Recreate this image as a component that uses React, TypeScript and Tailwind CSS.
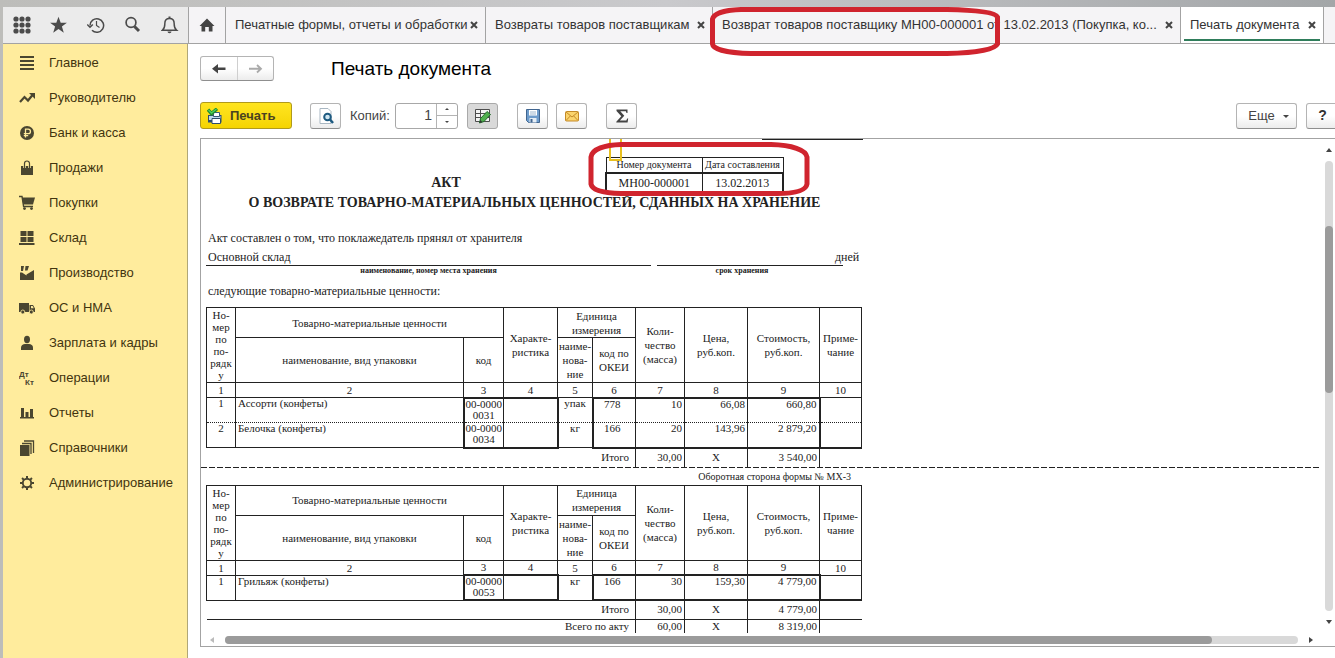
import { useState, type ReactNode } from 'react';

function Icon({ size = 16, box = 16, children }: { size?: number; box?: number; children: ReactNode }) {
  return (
    <svg width={size} height={size} viewBox={`0 0 ${box} ${box}`} aria-hidden="true" className="shrink-0">
      {children}
    </svg>
  );
}

const ink = '#4a4630';

const sections: { label: string; icon: ReactNode }[] = [
  {
    label: 'Главное',
    icon: <path d="M1 1h14v2H1zM1 5h14v2H1zM1 9h14v2H1zM1 13h14v2H1z" fill={ink} />,
  },
  {
    label: 'Руководителю',
    icon: (
      <>
        <path d="M1 12l4.5-5 3.5 3.5L13.5 5" fill="none" stroke={ink} strokeWidth="2.2" />
        <path d="M10 3h6v6z" fill={ink} />
      </>
    ),
  },
  {
    label: 'Банк и касса',
    icon: (
      <>
        <circle cx="8" cy="8" r="7" fill={ink} />
        <path d="M6.5 12.5V4.2h2.7a2.2 2.2 0 0 1 0 4.5H4.8M4.8 10.6h4.4" fill="none" stroke="#ffeb9c" strokeWidth="1.3" />
      </>
    ),
  },
  {
    label: 'Продажи',
    icon: (
      <>
        <path d="M2 6h12v9H2z" fill={ink} />
        <path d="M5.5 8V3.5a2.5 2.5 0 0 1 5 0V8" fill="none" stroke="#ffeb9c" strokeWidth="2.6" />
        <path d="M5.5 8V3.5a2.5 2.5 0 0 1 5 0V8" fill="none" stroke={ink} strokeWidth="1.2" />
      </>
    ),
  },
  {
    label: 'Покупки',
    icon: (
      <>
        <path d="M0 1.5h3l1.6 10H14" fill="none" stroke={ink} strokeWidth="1.4" />
        <path d="M3 2.5h13l-2 7H4.3z" fill={ink} />
        <circle cx="5.5" cy="13.6" r="1.4" fill={ink} />
        <circle cx="12.5" cy="13.6" r="1.4" fill={ink} />
      </>
    ),
  },
  {
    label: 'Склад',
    icon: <path d="M1.500 1h6v5h-6zM8.500 1h6v5h-6zM1.500 7h6v5h-6zM8.500 7h6v5h-6zM0 13h15.500v2H0z" fill={ink} />,
  },
  {
    label: 'Производство',
    icon: (
      <>
        <path d="M1 15V7.500h2L7.500 10.500v-1L15 5v10z" fill={ink} />
        <path d="M2 1h3L4 6H2zM6.500 1h3.500L8.500 5.500H6z" fill={ink} />
      </>
    ),
  },
  {
    label: 'ОС и НМА',
    icon: (
      <>
        <path d="M0 3h10v9H0zM10.500 5H14l2 3.500V12h-5.500z" fill={ink} />
        <path d="M12 6h1.600l1.200 2.300H12z" fill="#ffeb9c" />
        <circle cx="3.800" cy="12" r="2" fill={ink} stroke="#ffeb9c" strokeWidth=".8" />
        <circle cx="12.300" cy="12" r="2" fill={ink} stroke="#ffeb9c" strokeWidth=".8" />
      </>
    ),
  },
  {
    label: 'Зарплата и кадры',
    icon: (
      <>
        <ellipse cx="8" cy="4.500" rx="3" ry="3.700" fill={ink} />
        <path d="M2 15v-2.500C2 10.300 4 9.300 6 9h4c2 .3 4 1.300 4 3.500V15z" fill={ink} />
      </>
    ),
  },
  {
    label: 'Операции',
    icon: (
      <>
        <text x="0" y="7" fontSize="8" fontWeight="bold" fontFamily="Liberation Sans, sans-serif" fill={ink}>Дт</text>
        <text x="6" y="15" fontSize="8" fontWeight="bold" fontFamily="Liberation Sans, sans-serif" fill={ink}>Кт</text>
      </>
    ),
  },
  {
    label: 'Отчеты',
    icon: <path d="M2 3h3v9H2zM6.500 7h3v5h-3zM11 4h3v8h-3zM1 12h14v1.500H1z" fill={ink} />,
  },
  {
    label: 'Справочники',
    icon: (
      <>
        <path d="M1 5h9.500v11H1z" fill={ink} />
        <path d="M3 3.500h9V14M5 1h9.500v12" fill="none" stroke={ink} strokeWidth="1.300" />
      </>
    ),
  },
  {
    label: 'Администрирование',
    icon: (
      <>
        <circle cx="8" cy="8" r="4.200" fill="none" stroke={ink} strokeWidth="1.900" />
        <path
          d="M8 1v2.500M8 12.500V15M1 8h2.500M12.500 8H15M3.050 3.050l1.800 1.800M11.150 11.150l1.800 1.800M3.050 12.950l1.800-1.800M11.150 4.850l1.800-1.800"
          stroke={ink}
          strokeWidth="2"
        />
      </>
    ),
  },
];

const gray = '#4b4b4b';

const quickTools: { label: string; icon: ReactNode }[] = [
  {
    label: 'Меню функций',
    icon: (
      <g fill={gray}>
        {[3, 9, 15].map((y) => [3, 9, 15].map((x) => <circle key={`${x}-${y}`} cx={x} cy={y} r="2.600" />))}
      </g>
    ),
  },
  {
    label: 'Избранное',
    icon: <path d="M8.500 .8l2.200 6h6.200l-5 3.800 1.900 6.200-5.300-3.700-5.300 3.700 1.900-6.200-5-3.800h6.200z" fill={gray} />,
  },
  {
    label: 'История',
    icon: (
      <g fill="none" stroke={gray} strokeWidth="1.500">
        <path d="M3 9.500a6.800 6.800 0 1 1 2 4.800" />
        <path d="M9.500 5v4.500l3 2" strokeWidth="1.200" />
        <path d="M.2 8.500L3 11.300l2.800-2.800" />
      </g>
    ),
  },
  {
    label: 'Поиск',
    icon: (
      <g fill="none" stroke={gray}>
        <circle cx="7" cy="6.500" r="4.900" strokeWidth="1.700" />
        <path d="M10.500 10.500l4.500 4.500" strokeWidth="3" />
      </g>
    ),
  },
  {
    label: 'Оповещения',
    icon: (
      <>
        <path d="M1.500 14.200c2.500-2 2.300-4 2.300-6.500C3.800 4.500 5.800 2.500 8.500 2.500s4.700 2 4.700 5.200c0 2.500-.2 4.500 2.300 6.500z" fill="none" stroke={gray} strokeWidth="1.500" />
        <path d="M6.500 15.500h4a2 1.700 0 0 1-4 0zM7.500 .5h2v2h-2z" fill={gray} />
      </>
    ),
  },
];

const tabs = [
  { label: 'Печатные формы, отчеты и обработки', width: 'w-[260px]' },
  { label: 'Возвраты товаров поставщикам', width: 'w-[227px]' },
  { label: 'Возврат товаров поставщику МН00-000001 от 13.02.2013 (Покупка, ко...', width: 'w-[468px]', marked: true },
  { label: 'Печать документа', width: 'w-[143px]', active: true },
];

function TopBar() {
  return (
    <header className="flex h-[37px] shrink-0 border-b border-[#a3a3a3] bg-[#f5f4f6]">
      <div className="flex w-[185px] shrink-0 items-center gap-[19px] bg-[#ebebeb] pl-[10px]">
        {quickTools.map((t) => (
          <button key={t.label} type="button" aria-label={t.label} className="shrink-0">
            <Icon size={18} box={18}>{t.icon}</Icon>
          </button>
        ))}
      </div>
      <button type="button" aria-label="Начальная страница" className="flex w-[38px] shrink-0 items-center justify-center border-x border-[#a3a3a3]">
        <Icon size={16}>
          <path d="M8 1.500L15.500 9H13.500v5.500H9.800V10H6.200v4.500H2.500V9H.5z" fill="#444" />
        </Icon>
      </button>
      <nav aria-label="Открытые окна" className="flex min-w-0">
        {tabs.map((t) => (
          <div
            key={t.label}
            className={`relative flex shrink-0 items-center border-r border-[#a3a3a3] pr-[7px] pl-[9px] ${t.width} ${t.active ? 'bg-white' : ''}`}
          >
            <a href="#" className="min-w-0 flex-1 text-[13px] whitespace-nowrap text-[#333]">{t.label}</a>
            <button type="button" aria-label={`Закрыть: ${t.label}`} className="shrink-0">
              <Icon size={8} box={8}>
                <path d="M1 1l6 6M7 1L1 7" stroke="#444" strokeWidth="2" />
              </Icon>
            </button>
            {t.active && <span className="absolute inset-x-[3px] bottom-[2px] h-[2px] bg-[#2f7d5b]" />}
            {t.marked && (
              <svg width="292" height="50" viewBox="0 0 292 50" aria-hidden="true" className="pointer-events-none absolute -top-px -left-1 z-10">
                <path
                  d="M32 3.500H238C266 4 286 6 288.500 11V38C286 43 268 47 238 47.500H42C18 47 4 43 3.500 38V13C5 7 18 4 32 3.500Z"
                  fill="none"
                  stroke="#d0242e"
                  strokeWidth="5"
                />
              </svg>
            )}
          </div>
        ))}
      </nav>
    </header>
  );
}

function Sidebar() {
  return (
    <nav aria-label="Разделы" className="w-[185px] shrink-0 border-r border-[#b0a778] bg-[#ffec9d] pt-[1px]">
      <ul>
        {sections.map((s) => (
          <li key={s.label}>
            <a href="#" className="flex h-[35px] items-center gap-[14px] pl-4 text-[13px] text-[#42340f]">
              <Icon>{s.icon}</Icon>
              {s.label}
            </a>
          </li>
        ))}
      </ul>
    </nav>
  );
}

const button =
  'flex h-[26px] shrink-0 items-center justify-center rounded-[3px] border border-[#b4b4b4] border-b-[#8f8f8f] bg-linear-to-b from-white from-50% to-[#ececec]';

function Toolbar() {
  const [copies, setCopies] = useState(1);
  return (
    <div className="flex items-center pt-[21px] pb-[9px] text-[13px] text-[#444]">
      <button
        type="button"
        className="flex h-[27px] w-[92px] shrink-0 items-center gap-[7px] rounded-[3px] border border-[#b09a1c] bg-linear-to-b from-[#ffe51f] to-[#f5d400] pl-[6px] font-bold text-[#4a4320]"
      >
        <Icon>
          <path d="M1 7h13.500v7.500H1z" fill="#2f4d6c" />
          <path d="M2 8h11.500v4H2z" fill="#bcd9ee" />
          <path d="M6.500 4.500h6v4h-6z" fill="#fff" stroke="#375a78" />
          <path d="M5 10.500h8.500v5H5z" fill="#fff" stroke="#2f4d6c" />
          <path d="M1 1.500l3.500 4L10 .8" fill="none" stroke="#1c8a2f" strokeWidth="3.400" />
          <path d="M1.500 2l3 3L9.500 1" fill="none" stroke="#4fd05a" strokeWidth="1.400" />
        </Icon>
        Печать
      </button>
      <button type="button" aria-label="Предварительный просмотр" className={`${button} ml-[18px] w-[31px]`}>
        <Icon>
          <path d="M2 .5h8l3 3v12H2z" fill="#fff" stroke="#a9b7c2" />
          <circle cx="9.500" cy="9" r="3.300" fill="#cfe6f2" stroke="#1d5a80" strokeWidth="2" />
          <path d="M12 11.500l3 3.500" stroke="#1d5a80" strokeWidth="2.500" />
        </Icon>
      </button>
      <label htmlFor="copies" className="ml-[9px] w-[45px] shrink-0">Копий:</label>
      <div className="flex h-[26px] w-[63px] shrink-0 rounded-[3px] border border-[#a8a8a8] bg-white">
        <input
          id="copies"
          type="text"
          inputMode="numeric"
          value={copies}
          onChange={(e) => setCopies(Number(e.target.value) || 0)}
          className="w-0 min-w-0 flex-1 pr-1 text-right text-[14px] outline-none"
        />
        <div className="flex w-[21px] flex-col border-l border-[#b4b4b4]">
          <button type="button" aria-label="Больше" onClick={() => setCopies(copies + 1)} className="flex flex-1 items-center justify-center border-b border-[#b4b4b4]">
            <Icon size={6} box={6}><path d="M1 4l2-2 2 2z" fill="#444" /></Icon>
          </button>
          <button type="button" aria-label="Меньше" onClick={() => setCopies(Math.max(1, copies - 1))} className="flex flex-1 items-center justify-center">
            <Icon size={6} box={6}><path d="M1 2l2 2 2-2z" fill="#444" /></Icon>
          </button>
        </div>
      </div>
      <button
        type="button"
        aria-label="Редактирование"
        aria-pressed="true"
        className="ml-[9px] flex h-[26px] w-[31px] shrink-0 items-center justify-center rounded-[3px] border border-[#a9a9a9] bg-[#d9d9d9]"
      >
        <Icon size={18} box={18}>
          <path d="M1.500 2.500h14v12h-14zM1.500 6.500h14M1.500 10.500h14M6.500 2.500v12" fill="#f4f4f4" stroke="#4c4c4c" />
          <path d="M5.500 16l1-4.500L13 4.500l3.500 3L10 14.500z" fill="#4fae4d" stroke="#23692c" />
          <path d="M5.500 16l.8-3 2 2z" fill="#333" />
        </Icon>
      </button>
      <button type="button" aria-label="Сохранить" className={`${button} ml-[19px] w-[31px]`}>
        <Icon>
          <path d="M1.500 1.500h13v13h-11l-2-2z" fill="#6e9ccb" stroke="#40658f" />
          <path d="M4 2h8v5.500H4z" fill="#fff" />
          <path d="M5 4h6M5 6h6" stroke="#9db6cd" />
          <path d="M4.500 10h7v4.500h-7z" fill="#e6eef5" />
          <path d="M5.500 11h2v3.500h-2z" fill="#40658f" />
        </Icon>
      </button>
      <button type="button" aria-label="Отправить по почте" className={`${button} ml-2 w-[31px]`}>
        <Icon>
          <rect x="1.500" y="3.500" width="13" height="9.500" rx="1" fill="#fbd46c" stroke="#c48a28" />
          <path d="M2 4l6 5 6-5M2 12.500L6.300 8M14 12.500L9.700 8" fill="none" stroke="#c48a28" />
        </Icon>
      </button>
      <button type="button" aria-label="Сумма" className={`${button} ml-[19px] w-[31px]`}>
        <Icon>
          <path d="M2.500 1.500h11v3.500h-1l-.6-1.700H6.300l4 4.400-4.400 4.800h6.400l.9-2h1l-.6 4H2.300v-.8l5-5.500-4.800-5.300z" fill="#444" />
        </Icon>
      </button>
      <div className="flex-1" />
      <button type="button" className={`${button} w-[61px] gap-2 pl-1 text-[#444]`}>
        Еще
        <Icon size={6} box={6}><path d="M0 2h6L3 5z" fill="#444" /></Icon>
      </button>
      <button type="button" aria-label="Справка" className={`${button} -mr-1 ml-[9px] w-[33px] text-[14px] font-bold text-[#333]`}>?</button>
    </div>
  );
}

const L = 'border-[#222]';
const hd = `border ${L} p-0 font-normal align-middle`;

type Row = { n: string; name: string; code: [string, string]; unit: string; okei: string; qty: string; price: string; sum: string };
type Total = { label: string; qty: string; sum: string };

function GoodsTable({ rows, totals }: { rows: Row[]; totals: Total[] }) {
  return (
    <table className="w-[656px] table-fixed border-collapse text-center text-[11px] leading-[14px]">
      <colgroup>
        <col className="w-[29px]" />
        <col className="w-[228px]" />
        <col className="w-[40px]" />
        <col className="w-[54px]" />
        <col className="w-[35px]" />
        <col className="w-[43px]" />
        <col className="w-[49px]" />
        <col className="w-[63px]" />
        <col className="w-[72px]" />
        <col className="w-[42px]" />
      </colgroup>
      <thead>
        <tr className="h-[30px]">
          <th rowSpan={2} className={`${hd} leading-[12px]`}>Но-<br />мер<br />по<br />по-<br />рядк<br />у</th>
          <th colSpan={2} className={hd}>Товарно-материальные ценности</th>
          <th rowSpan={2} className={hd}>Характе-<br />ристика</th>
          <th colSpan={2} className={hd}>Единица<br />измерения</th>
          <th rowSpan={2} className={hd}>Коли-<br />чество<br />(масса)</th>
          <th rowSpan={2} className={hd}>Цена,<br />руб.коп.</th>
          <th rowSpan={2} className={hd}>Стоимость,<br />руб.коп.</th>
          <th rowSpan={2} className={hd}>Приме-<br />чание</th>
        </tr>
        <tr className="h-[45px]">
          <th className={hd}>наименование, вид упаковки</th>
          <th className={hd}>код</th>
          <th className={hd}>наиме-<br />нова-<br />ние</th>
          <th className={hd}>код по<br />ОКЕИ</th>
        </tr>
        <tr className="h-[15px] leading-[12px]">
          {['1', '2', '3', '4', '5', '6', '7', '8', '9', '10'].map((n) => (
            <th key={n} className={hd}>{n}</th>
          ))}
        </tr>
      </thead>
      <tbody>
        {rows.map((r, i) => {
          const last = i === rows.length - 1;
          const thin = last ? 'border-b' : 'border-b [border-bottom-style:dotted]!';
          const thick = last ? 'border-b-2' : 'border-b [border-bottom-style:dotted]!';
          const top = i === 0 ? 'border-t-2' : '';
          const cell = `${L} py-0 align-top leading-[11px]`;
          return (
            <tr key={r.n} className="h-[25px]">
              <td className={`${cell} border-x px-0 ${thin}`}>{r.n}</td>
              <td className={`${cell} border-x px-[2px] text-left ${thin}`}>{r.name}</td>
              <td className={`${cell} border-r border-l-2 px-0 ${top} ${thick}`}>{r.code[0]}<br />{r.code[1]}</td>
              <td className={`${cell} border-r-2 border-l px-0 ${top} ${thick}`} />
              <td className={`${cell} px-0 ${thin}`}>{r.unit}</td>
              <td className={`${cell} border-r border-l-2 pr-1 pl-0 ${top} ${thick}`}>{r.okei}</td>
              <td className={`${cell} border-x pr-[2px] pl-0 text-right ${top} ${thick}`}>{r.qty}</td>
              <td className={`${cell} border-x pr-[2px] pl-0 text-right ${top} ${thick}`}>{r.price}</td>
              <td className={`${cell} border-r-2 border-l pr-[2px] pl-0 text-right ${top} ${thick}`}>{r.sum}</td>
              <td className={`${cell} border-r px-0 ${thick}`} />
            </tr>
          );
        })}
      </tbody>
      <tfoot>
        {totals.map((t, i) => {
          const line = i < totals.length - 1 ? 'border-b' : '';
          const align = i > 0 ? 'align-top' : 'align-middle';
          const cell = `${L} ${line} ${align} py-0`;
          return (
            <tr key={t.label} className="h-[19px] leading-[13px]">
              <td colSpan={6} className={`${cell} pr-[6px] pl-0 text-right`}>{t.label}</td>
              <td className={`${cell} border-x pr-[2px] pl-0 text-right`}>{t.qty}</td>
              <td className={`${cell} border-x px-0`}>X</td>
              <td className={`${cell} border-x pr-[2px] pl-0 text-right`}>{t.sum}</td>
              <td className={`${cell} px-0`} />
            </tr>
          );
        })}
      </tfoot>
    </table>
  );
}

function Document() {
  return (
    <article className="font-['Liberation_Serif','Times_New_Roman',serif] text-[12px] leading-[16px] text-[#222]">
      <div className="relative flex w-[662px] items-start pl-[5px]">
        <p className="w-[399px] pt-[36px] pl-[81px] text-center text-[14px] font-bold">АКТ</p>
        <table className="mt-[18px] w-[179px] table-fixed border-collapse text-center">
          <thead>
            <tr className="h-[15px] text-[10px] leading-[14px]">
              <th className={`${hd} w-[96px]`}>Номер документа</th>
              <th className={hd}>Дата составления</th>
            </tr>
          </thead>
          <tbody>
            <tr className="h-[19px]">
              <td className={`${L} border-2 border-r p-0`}>МН00-000001</td>
              <td className={`${L} border-2 border-l p-0`}>13.02.2013</td>
            </tr>
          </tbody>
        </table>
        <span className="absolute top-0 right-0 h-px w-[101px] bg-[#222]" />
        <span className="absolute top-0 left-[408px] h-[22px] w-[13px] border-2 border-t-0 border-[#e8c020]" />
        <svg width="224" height="58" viewBox="0 0 224 58" aria-hidden="true" className="pointer-events-none absolute top-0 left-[386px] z-10">
          <path
            d="M34 5.500H184C205 6 219 11 220 18V45C219 52 208 54.500 190 54.500H34C16 54 5 51 4 45V18C5 10 18 6 34 5.500Z"
            fill="none"
            stroke="#d0242e"
            strokeWidth="5"
          />
        </svg>
      </div>
      <h2 className="w-[667px] pt-[2px] text-center text-[14px] font-bold whitespace-nowrap">
        О ВОЗВРАТЕ ТОВАРНО-МАТЕРИАЛЬНЫХ ЦЕННОСТЕЙ, СДАННЫХ НА ХРАНЕНИЕ
      </h2>
      <div className="w-[662px] pl-[5px]">
        <p className="px-[2px] pt-[19px]">Акт составлен о том, что поклажедатель прянял от хранителя</p>
        <div className="flex pt-[3px]">
          <div className="w-[445px]">
            <p className="border-b border-[#222] px-[2px]">Основной склад</p>
            <p className="text-center text-[8px] leading-[10px] font-bold">наименование, номер места хранения</p>
          </div>
          <div className="ml-[6px] w-[186px]">
            <p className="h-[17px] border-b border-[#222]" />
            <p className="pr-4 text-center text-[8px] leading-[10px] font-bold">срок хранения</p>
          </div>
          <p className="-ml-[8px]">дней</p>
        </div>
        <p className="px-[2px] pt-[7px] pb-2">следующие товарно-материальные ценности:</p>
        <GoodsTable
          rows={[
            { n: '1', name: 'Ассорти (конфеты)', code: ['00-0000', '0031'], unit: 'упак', okei: '778', qty: '10', price: '66,08', sum: '660,80' },
            { n: '2', name: 'Белочка (конфеты)', code: ['00-0000', '0034'], unit: 'кг', okei: '166', qty: '20', price: '143,96', sum: '2 879,20' },
          ]}
          totals={[{ label: 'Итого', qty: '30,00', sum: '3 540,00' }]}
        />
      </div>
      <div className="mr-[3px] h-px bg-[repeating-linear-gradient(90deg,#222_0_6px,transparent_6px_8px)]" />
      <p className="w-[650px] text-right text-[10px] leading-[17px]">Оборотная сторона формы № МХ-3</p>
      <div className="w-[662px] pl-[5px]">
        <GoodsTable
          rows={[
            { n: '1', name: 'Грильяж (конфеты)', code: ['00-0000', '0053'], unit: 'кг', okei: '166', qty: '30', price: '159,30', sum: '4 779,00' },
          ]}
          totals={[
            { label: 'Итого', qty: '30,00', sum: '4 779,00' },
            { label: 'Всего по акту', qty: '60,00', sum: '8 319,00' },
          ]}
        />
      </div>
    </article>
  );
}

export default function App() {
  return (
    <div className="flex h-screen flex-col overflow-hidden bg-linear-to-r from-[#bdbdba] via-[#c9c9cc] to-[#a3a6a8] pt-[7px] pl-[3px] font-['Liberation_Sans',Arial,sans-serif]">
      <TopBar />
      <div className="flex min-h-0 flex-1 bg-white">
        <Sidebar />
        <main className="flex min-w-0 flex-1 flex-col pb-[11px] pl-3">
          <div className="flex items-center pt-3">
            <div className="flex h-[25px] w-[74px] shrink-0 rounded-[3px] border border-[#b4b4b4] border-b-[#8f8f8f] bg-linear-to-b from-white from-50% to-[#ececec]">
              <button type="button" aria-label="Назад" className="flex flex-1 items-center justify-center border-r border-[#cfcfcf]">
                <Icon><path d="M7 3v3.500h7.500V9H7v3.500L1 7.750z" fill="#444" /></Icon>
              </button>
              <button type="button" aria-label="Вперед" className="flex flex-1 items-center justify-center">
                <Icon><path d="M2 7.750h12M10 4l4 3.750L10 11.500" fill="none" stroke="#aaa" strokeWidth="1.800" /></Icon>
              </button>
            </div>
            <h1 className="pl-[57px] text-[19px] leading-[25px] text-black">Печать документа</h1>
          </div>
          <Toolbar />
          <div className="flex min-h-0 flex-1 flex-col border-y border-l border-[#a3a3a3]">
            <div className="flex min-h-0 flex-1">
              <div className="min-w-0 flex-1 overflow-hidden">
                <Document />
              </div>
              <div className="flex w-[12px] shrink-0 flex-col items-center gap-2 pt-2">
                <Icon size={6} box={6}><path d="M0 5h6L3 1z" fill="#444" /></Icon>
                <div className="flex w-2 flex-1 flex-col rounded-full bg-[#d9d9d9]">
                  <div className="flex-[65]" />
                  <div className="flex-[166] rounded-full bg-[#9b9b9b]" />
                  <div className="flex-[217]" />
                </div>
                <div className="pb-2"><Icon size={6} box={6}><path d="M0 1h6L3 5z" fill="#444" /></Icon></div>
              </div>
            </div>
            <div className="flex h-[13px] shrink-0 items-center gap-[10px] pr-[21px] pl-2">
              <Icon size={6} box={6}><path d="M5 0v6L1 3z" fill="#bbb" /></Icon>
              <div className="h-2 flex-1 rounded-full bg-[#d9d9d9]">
                <div className="h-2 w-[92%] rounded-full bg-[#9b9b9b]" />
              </div>
              <Icon size={6} box={6}><path d="M1 0v6L5 3z" fill="#444" /></Icon>
            </div>
          </div>
        </main>
      </div>
    </div>
  );
}
